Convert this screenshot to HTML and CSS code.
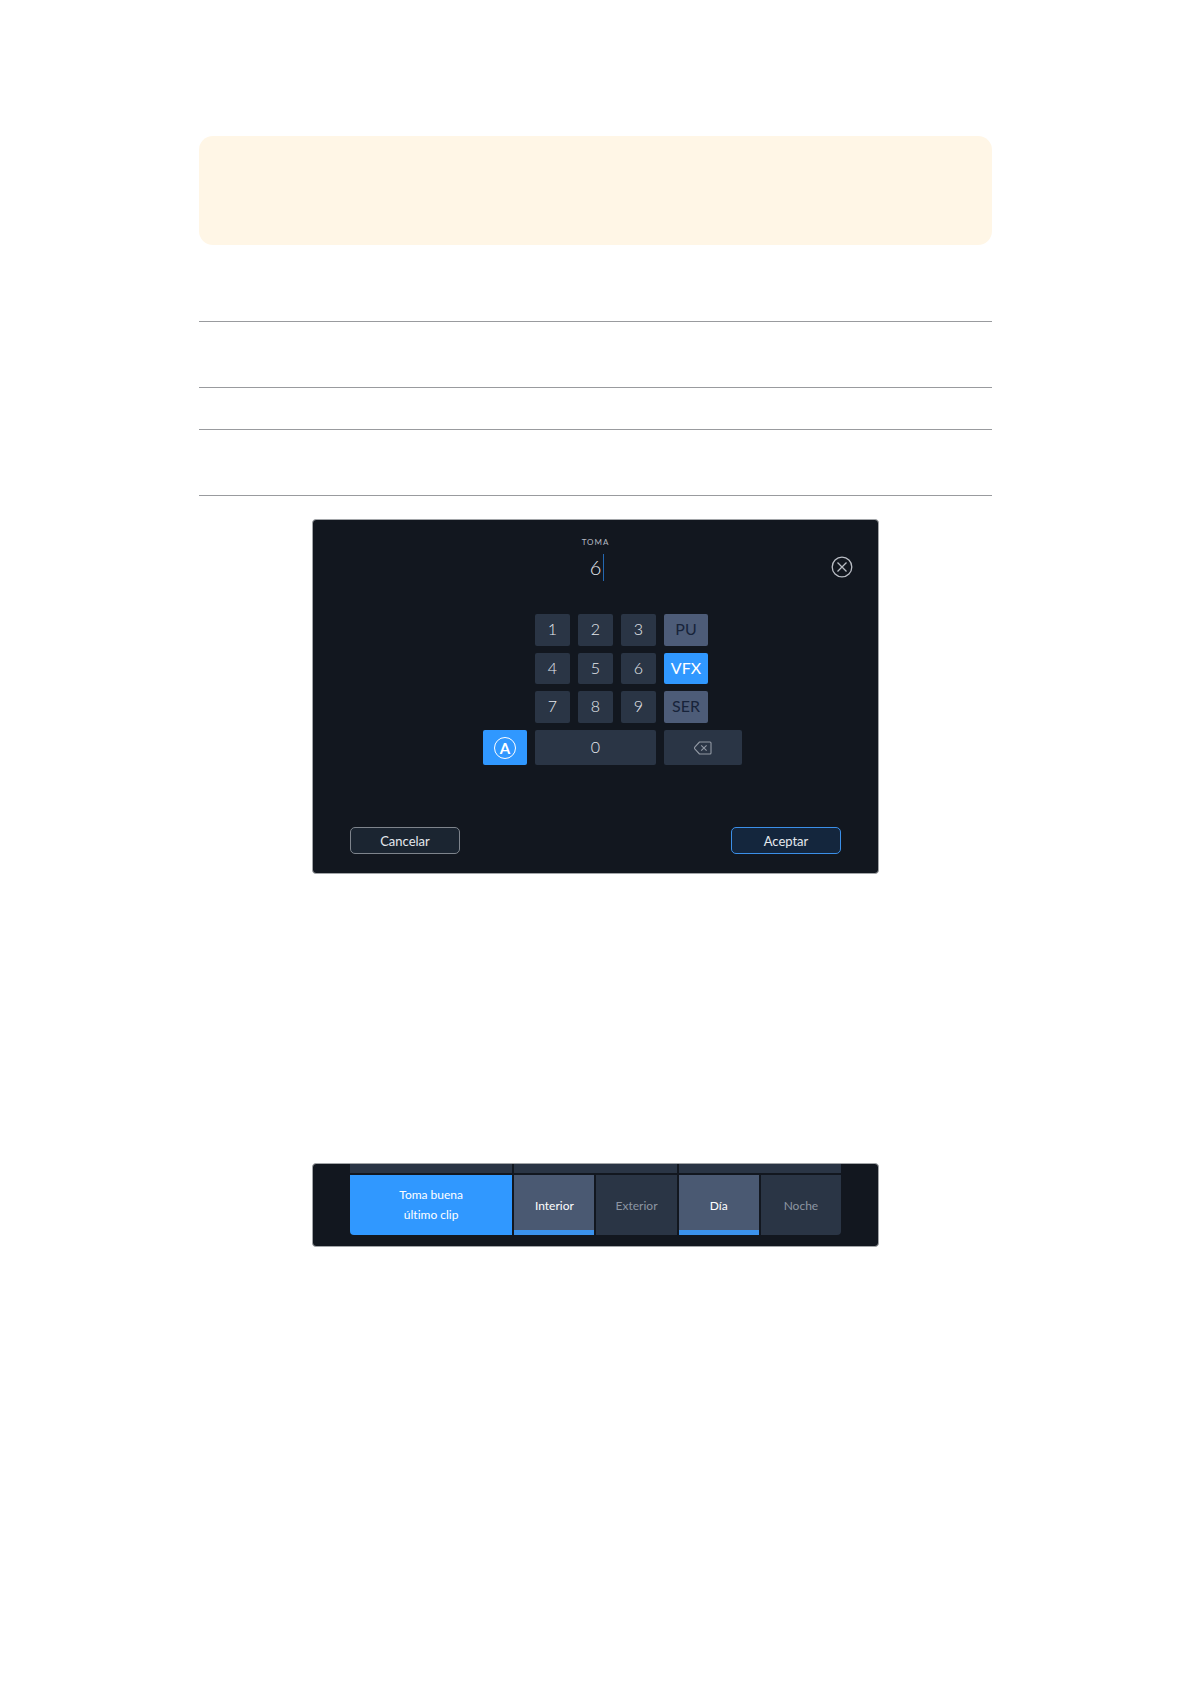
FILE: index.html
```
<!DOCTYPE html>
<html lang="es">

<head>
    <meta charset="UTF-8">
    <meta name="viewport" content="width=device-width, initial-scale=1.0">
    <title>Toma</title>
    <link rel="stylesheet" href="styles.css">
</head>

<body>
    <main>
        <aside class="note"></aside>

        <section class="rules">
            <div class="rule-row tall"></div>
            <div class="rule-row short"></div>
            <div class="rule-row tall"></div>
        </section>

        <form class="panel take-panel">
            <header class="take-header">
                <div class="take-field">
                    <label for="take">TOMA</label>
                    <div class="take-value">
                        <input type="text" id="take" value="6">
                    </div>
                </div>
                <button type="button" class="close-btn" aria-label="Cerrar">
                    <svg width="22" height="22" viewBox="0 0 22 22" fill="none" stroke="currentColor" stroke-width="1.3">
                        <circle cx="11" cy="11" r="9.8" />
                        <path d="M6.5 6.5l9 9M15.5 6.5l-9 9" />
                    </svg>
                </button>
            </header>

            <div class="keypad">
                <button type="button" class="key first">1</button>
                <button type="button" class="key">2</button>
                <button type="button" class="key">3</button>
                <button type="button" class="key tag">PU</button>

                <button type="button" class="key first">4</button>
                <button type="button" class="key">5</button>
                <button type="button" class="key">6</button>
                <button type="button" class="key tag active">VFX</button>

                <button type="button" class="key first">7</button>
                <button type="button" class="key">8</button>
                <button type="button" class="key">9</button>
                <button type="button" class="key tag">SER</button>

                <button type="button" class="key auto active"><span class="auto-badge">A</span></button>
                <button type="button" class="key zero">0</button>
                <button type="button" class="key erase" aria-label="Borrar">
                    <svg width="18" height="14" viewBox="0 0 18 14" fill="none" stroke="currentColor" stroke-width="1.1" stroke-linejoin="round">
                        <path d="M5.5 1H16q1 0 1 1v10q0 1-1 1H5.5L1 8.2q-1-1.2 0-2.4z" />
                        <path d="M7.2 4.3l5.4 5.4M12.6 4.3L7.2 9.7" />
                    </svg>
                </button>
            </div>

            <footer class="take-actions">
                <button type="button" class="action cancel">Cancelar</button>
                <button type="submit" class="action accept">Aceptar</button>
            </footer>
        </form>

        <section class="panel scene-panel">
            <div class="scene-grid">
                <div class="strip"></div>
                <div class="strip"></div>
                <div class="strip"></div>
                <button type="button" class="good-take">Toma buena<br>último clip</button>
                <div class="toggle">
                    <button type="button" class="option selected">Interior</button>
                    <button type="button" class="option">Exterior</button>
                </div>
                <div class="toggle">
                    <button type="button" class="option selected">Día</button>
                    <button type="button" class="option last">Noche</button>
                </div>
            </div>
        </section>
    </main>
</body>

</html>
```
FILE: styles.css
```
/* Reset */
* {
    margin: 0;
    padding: 0;
    box-sizing: border-box;
}

body {
    font-family: Lato, sans-serif;
    font-variant-ligatures: none;
    background-color: #fff;
    color: #e6e9ee;
}

button,
input {
    font-family: inherit;
    font-variant-ligatures: inherit;
    color: inherit;
    background: none;
    border: none;
}

button {
    cursor: pointer;
}

main {
    width: 66.66%;
    margin: 0 auto;
    padding: 136px 0;
}

.note {
    min-height: 109px;
    background: #fff6e6;
    border-radius: 14px;
}

.rules {
    margin-top: 76px;
    border-top: 1px solid #999b9e;
}

.rule-row {
    border-bottom: 1px solid #999b9e;
}

.rule-row.tall {
    height: 66px;
}

.rule-row.short {
    height: 42px;
}

/* Dark panels */
.panel {
    max-width: 567px;
    margin: 0 auto;
    background: #12171f;
    border: 1px solid #a2a5a8;
    border-radius: 4px;
}

.take-panel {
    margin-top: 23px;
}

.take-header {
    display: grid;
    grid-template-columns: 1fr auto 1fr;
    align-items: end;
    padding: 16px 25px 0;
}

.take-field {
    grid-column: 2;
    text-align: center;
}

.take-field label {
    display: block;
    font-size: 8px;
    line-height: 12px;
    letter-spacing: 1px;
    color: #b5bac2;
}

.take-value {
    position: relative;
    margin-top: 5px;
}

.take-value input {
    display: block;
    width: 44px;
    height: 28px;
    margin: 0 auto;
    font-size: 20px;
    font-weight: 300;
    text-align: center;
    outline: none;
}

/* Text cursor */
.take-value::after {
    content: "";
    position: absolute;
    top: 1px;
    left: 50%;
    width: 1px;
    height: 27px;
    margin-left: 7px;
    background: #2467b0;
}

.close-btn {
    justify-self: end;
    height: 22px;
    margin-bottom: 3px;
    color: #b9bdc4;
}

.close-btn svg {
    display: block;
}

.keypad {
    display: grid;
    grid-template-columns: 1fr repeat(3, 35px) 1fr;
    grid-template-rows: 32px 31px 32px 35px;
    gap: 7px 8px;
    margin-top: 33px;
}

.key {
    display: flex;
    align-items: center;
    justify-content: center;
    padding-bottom: 3px;
    font-size: 16px;
    font-weight: 300;
    background: #2a3545;
    border-radius: 2px;
}

.key.first {
    grid-column: 2;
}

.key.tag {
    width: 44px;
    font-weight: 400;
    color: #17233a;
    background: #4d5c78;
}

.key.auto {
    width: 44px;
    padding-bottom: 0;
    justify-self: end;
}

.key.zero {
    grid-column: span 3;
}

.key.erase {
    width: 78px;
    padding-bottom: 0;
    color: #9299a4;
}

.key.tag.active,
.key.active {
    color: #fff;
    background: #3098ff;
}

.auto-badge {
    width: 22px;
    height: 22px;
    border: 1px solid #fff;
    border-radius: 50%;
    font-size: 15px;
    font-weight: 700;
    line-height: 20px;
}

.take-actions {
    display: flex;
    justify-content: space-between;
    margin-top: 62px;
    padding: 0 37px 19px;
}

.action {
    width: 110px;
    height: 27px;
    font-size: 13px;
    border: 1px solid;
    border-radius: 5px;
}

.action.cancel {
    background: #1b2531;
    border-color: #7e848c;
}

.action.accept {
    background: #14263d;
    border-color: #3b8fe8;
}

/* Scene options */
.scene-panel {
    margin-top: 289px;
    padding: 0 37px 11px;
}

.scene-grid {
    display: grid;
    grid-template-columns: repeat(3, 1fr);
    gap: 2px;
}

.strip {
    height: 9px;
    background: #2a3545;
}

.good-take {
    height: 60px;
    font-size: 12px;
    line-height: 20px;
    color: #fff;
    background: #3098ff;
    border-bottom-left-radius: 4px;
}

.toggle {
    display: grid;
    grid-template-columns: 1fr 1fr;
    gap: 2px;
}

.option {
    font-size: 12px;
    color: #8d95a2;
    background: #2a3545;
    border-bottom: 5px solid #2a3545;
    padding-top: 5px;
}

.option.selected {
    color: #fff;
    background: #4a5972;
    border-bottom-color: #3b92ec;
}

.option.last {
    border-bottom-right-radius: 4px;
}
```
